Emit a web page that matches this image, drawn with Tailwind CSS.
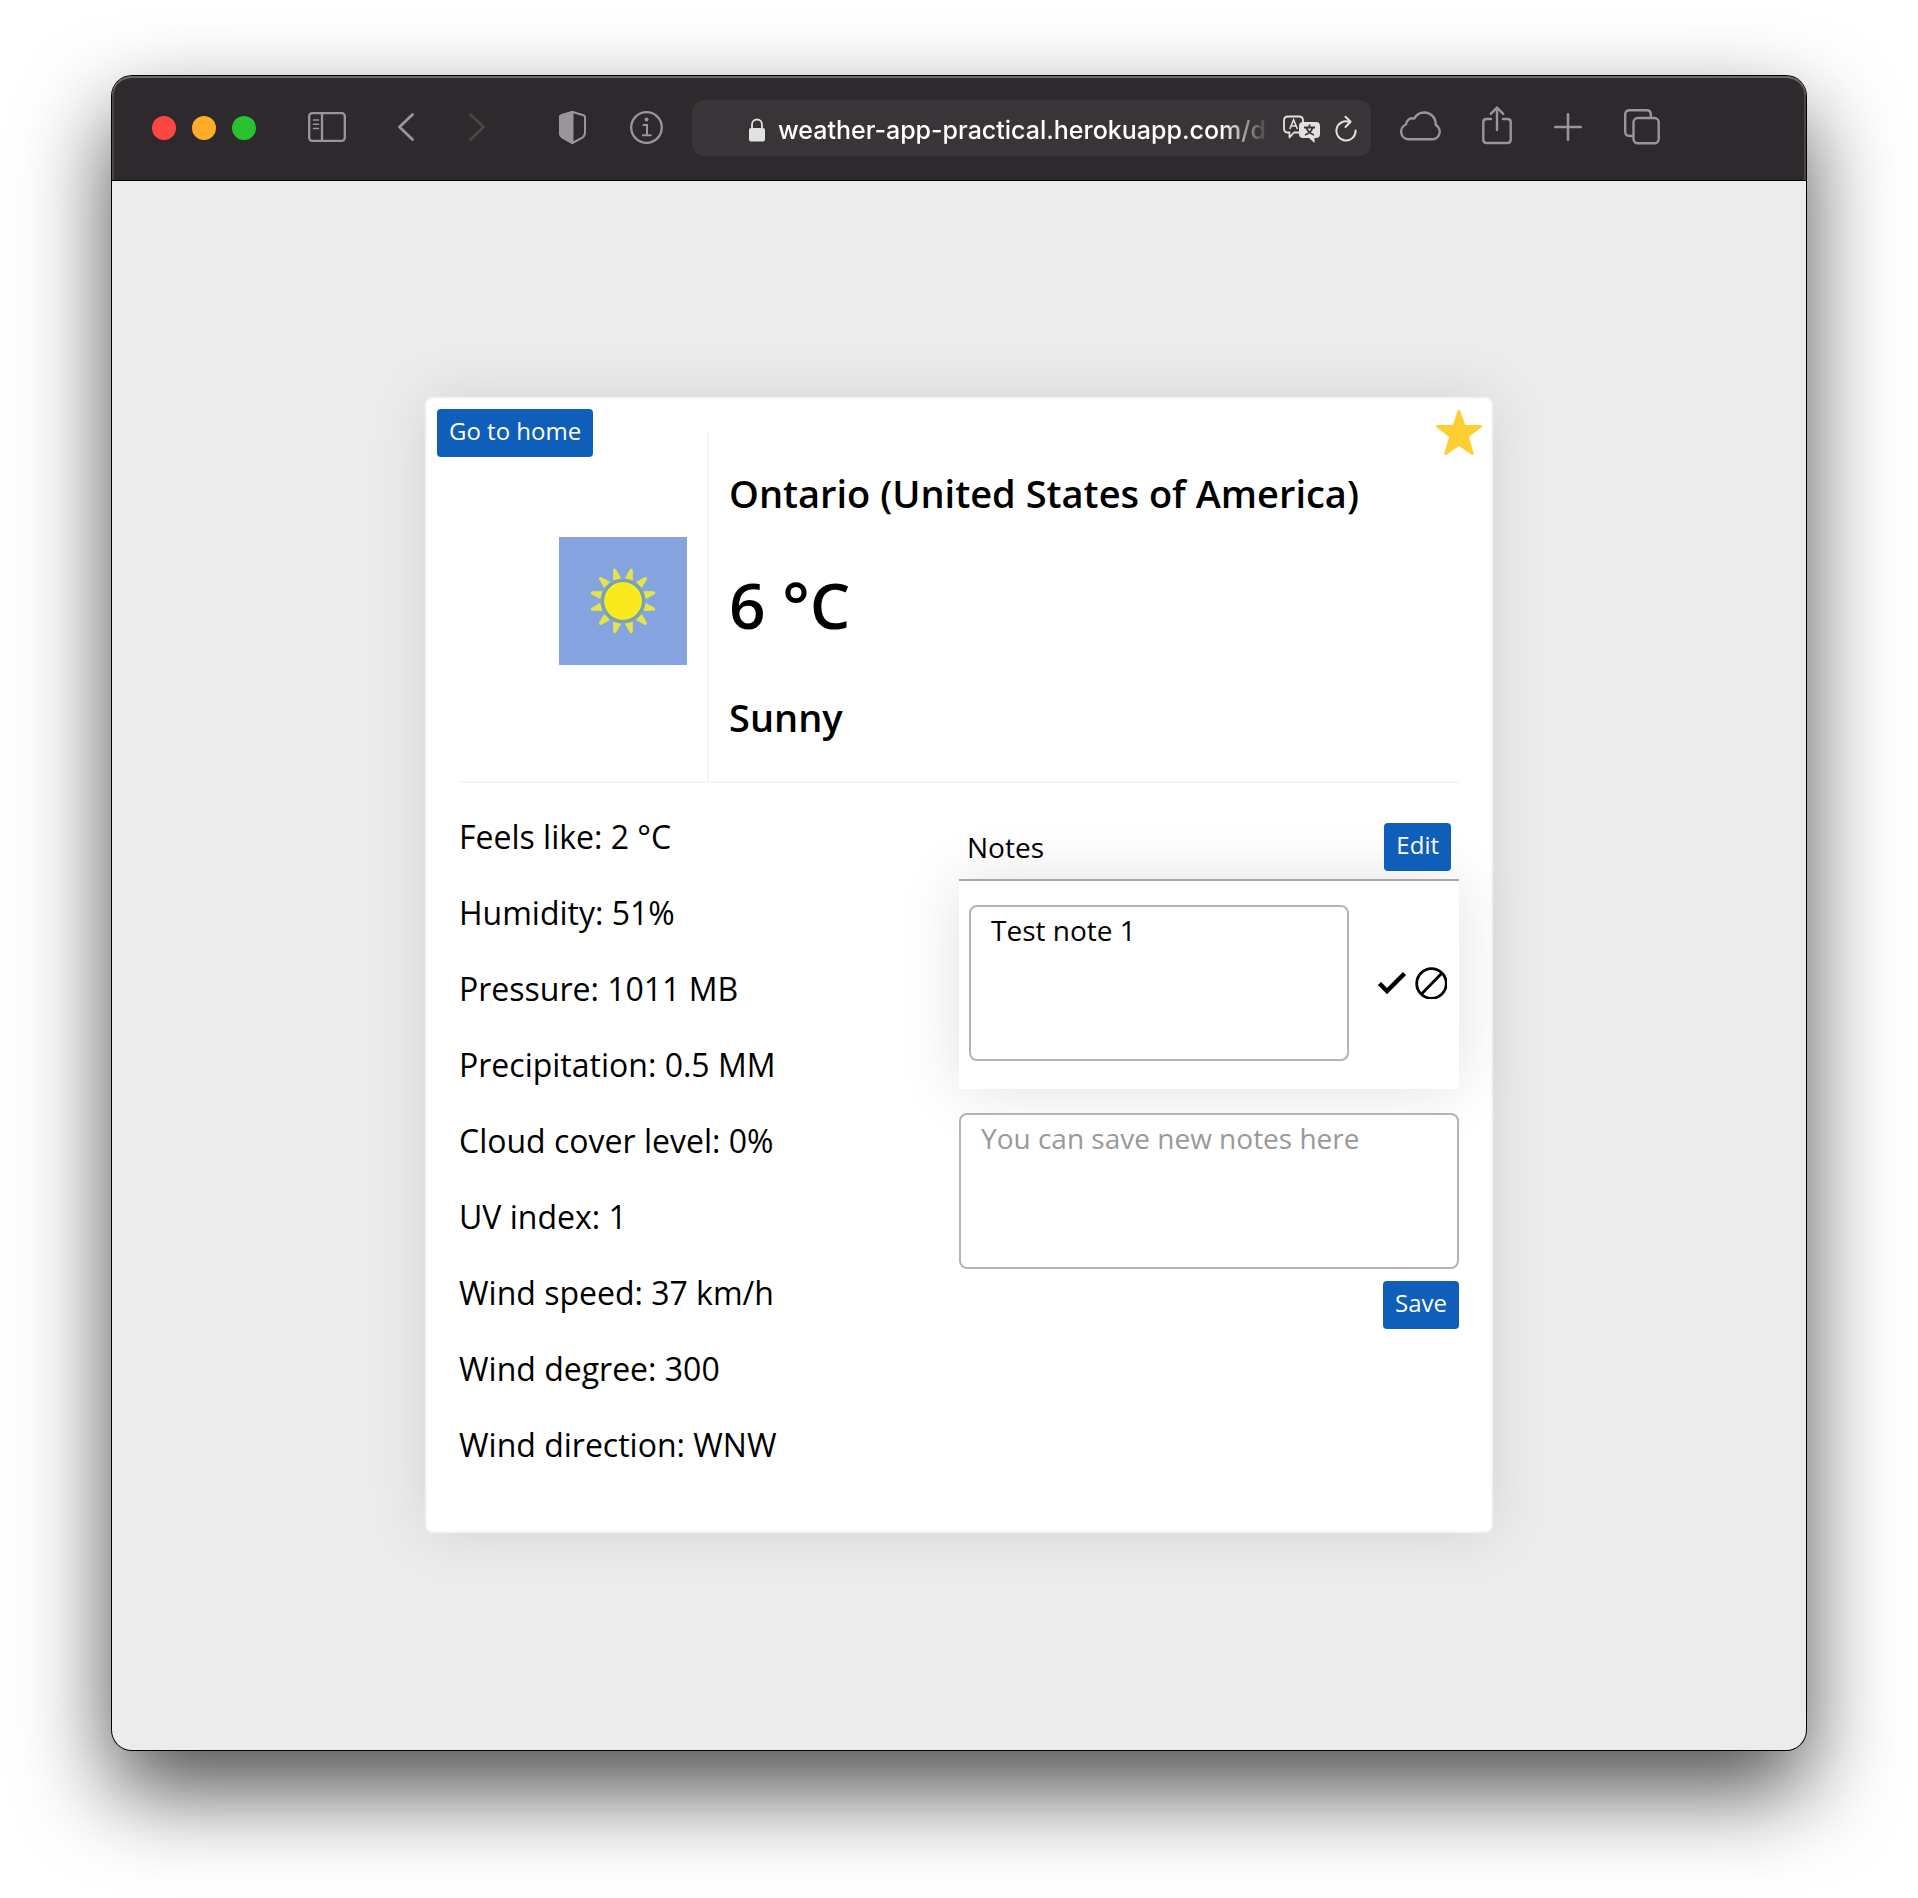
<!DOCTYPE html>
<html lang="en">
<head>
<meta charset="utf-8">
<meta name="viewport" content="width=device-width, initial-scale=1">
<title>Weather details</title>
<script src="https://cdn.jsdelivr.net/npm/@tailwindcss/browser@4"></script>
</head>
<body class="flex min-h-screen flex-col bg-white px-28 pt-[76px] pb-[148px] font-['Open_Sans',sans-serif] text-black">
<div class="flex flex-1 flex-col overflow-hidden rounded-[20px] bg-[#ececec] shadow-[0_0_0_1px_#000,0_40px_90px_rgba(0,0,0,0.7)]">

  <!-- Browser toolbar -->
  <header class="flex h-[105px] items-center rounded-t-[20px] border-b border-black bg-[#2e292c] pr-[146px] pl-10 text-[#9b959a] shadow-[inset_0_2px_0_#6b696a,inset_2px_0_0_#4a4748,inset_-2px_0_0_#4a4748]">
    <div class="flex gap-4">
      <button aria-label="Close" class="size-6 rounded-full bg-[#ff4644]"></button>
      <button aria-label="Minimize" class="size-6 rounded-full bg-[#ffae26]"></button>
      <button aria-label="Zoom" class="size-6 rounded-full bg-[#2ac231]"></button>
    </div>
    <button aria-label="Sidebar" class="mb-0.5 ml-[52px]">
      <svg class="block" width="38" height="30" viewBox="0 0 38 30" fill="none" stroke="currentColor" stroke-width="2.300"><rect x="1.200" y="1.200" width="35.600" height="27.600" rx="3"/><path d="M14 1v28"/><path d="M5.500 8h5M5.500 12.300h5M5.500 16.500h5" stroke-width="1.600" stroke-linecap="round"/></svg>
    </button>
    <button aria-label="Back" class="mb-0.5 ml-[52px]">
      <svg class="block" width="16" height="28" viewBox="0 0 16 28" fill="none" stroke="currentColor" stroke-width="2.800" stroke-linecap="round" stroke-linejoin="round"><path d="M14.500 1.500 1.500 14l13 12.500"/></svg>
    </button>
    <button aria-label="Forward" class="mb-0.5 ml-[55px] text-[#4a4548]">
      <svg class="block" width="16" height="28" viewBox="0 0 16 28" fill="none" stroke="currentColor" stroke-width="2.800" stroke-linecap="round" stroke-linejoin="round"><path d="M1.500 1.500 14.500 14l-13 12.500"/></svg>
    </button>
    <button aria-label="Privacy report" class="mb-0.5 ml-[74px]">
      <svg class="block" width="27" height="33" viewBox="0 0 27 33" fill="none" stroke="currentColor" stroke-width="2" stroke-linejoin="round"><path d="M13.500 1 24.500 4.300Q26 4.800 26 6.300V21.500Q26 24.700 23.300 26.600L13.500 32 3.700 26.600Q1 24.700 1 21.500V6.300Q1 4.800 2.500 4.300Z"/><path d="M13.500 1V32L3.700 26.600Q1 24.700 1 21.500V6.300Q1 4.800 2.500 4.300Z" fill="currentColor"/></svg>
    </button>
    <button aria-label="Page information" class="mb-0.5 ml-11">
      <svg class="block" width="33" height="33" viewBox="0 0 33 33" fill="none" stroke="currentColor" stroke-width="2.300"><circle cx="16.500" cy="16.500" r="15.300"/><path d="M13.500 14h3.500v10M12.800 24.300h8" stroke-width="2" stroke-linecap="round"/><circle cx="16.500" cy="8.500" r="2" fill="currentColor" stroke="none"/></svg>
    </button>
    <div class="ml-[29px] flex h-14 min-w-0 flex-1 items-center rounded-xl bg-[#393437] pt-1 pr-3 pl-14 text-[#e2e1e1]">
      <svg class="shrink-0" width="18" height="24" viewBox="0 0 18 24"><rect x="1" y="10" width="16" height="13.500" rx="2" fill="currentColor"/><path d="M4 11V6.500a5 5 0 0 1 10 0V11" fill="none" stroke="currentColor" stroke-width="1.800"/></svg>
      <input aria-label="Address" value="weather-app-practical.herokuapp.com/d" class="ml-3 h-8 min-w-0 flex-1 bg-transparent font-[Inter,sans-serif] text-[25px] leading-8 font-medium text-white outline-none [mask-image:linear-gradient(to_right,#000_90%,transparent)]">
      <button aria-label="Translate" class="ml-3">
        <svg class="block" width="38" height="30" viewBox="0 0 38 30"><path d="M17.500 17.500H11L6.500 22.500V17.500H5Q1 17.500 1 13.500V5.500Q1 1.500 5 1.500H16Q20 1.500 20 5.500V8" fill="none" stroke="currentColor" stroke-width="1.800" stroke-linejoin="round"/><path d="M6.800 14 10.600 4.800 14.400 14M8 11h5.200" fill="none" stroke="currentColor" stroke-width="1.600"/><path d="M20 7H33Q37 7 37 11V19Q37 23 33 23H31.500V28L26 23H20Q16 23 16 19V11Q16 7 20 7Z" fill="currentColor"/><path d="M26.500 9.500v3M21 12.500h11M23.500 13Q25 17.500 31 20M29.500 13Q28 17.500 22 20" fill="none" stroke="#393437" stroke-width="1.800"/></svg>
      </button>
      <button aria-label="Reload" class="ml-3.5">
        <svg class="block" width="24" height="30" viewBox="0 0 24 30" fill="none" stroke="currentColor" stroke-width="2" stroke-linecap="round" stroke-linejoin="round"><path d="M14.500 7A9.600 9.600 0 1 0 20.600 15.500"/><path d="M10.500 1.700 15.600 6.800 10.500 12"/></svg>
      </button>
    </div>
    <button aria-label="iCloud tabs" class="mb-1 ml-7">
      <svg class="block" width="42" height="30" viewBox="0 0 42 30" fill="none" stroke="currentColor" stroke-width="2.400" stroke-linejoin="round"><path d="M9 28.300H32.500a7.600 7.600 0 0 0 4.300-14.200C37 6.500 31.500 1.500 25.500 1.500c-4.500 0-8.300 2.300-10.200 6-4-1-8 1.500-8.300 6A7.700 7.700 0 0 0 9 28.300Z"/></svg>
    </button>
    <button aria-label="Share" class="mb-1 ml-[41px]">
      <svg class="block" width="30" height="42" viewBox="0 0 30 42" fill="none" stroke="currentColor" stroke-width="2.400" stroke-linecap="round" stroke-linejoin="round"><path d="M9 14H4.500Q1.300 14 1.300 17V34.500Q1.300 38 4.500 38H25.500Q28.700 38 28.700 34.500V17Q28.700 14 25.500 14H21M15 25V3M8.800 8.800 15 2.500l6.200 6.300"/></svg>
    </button>
    <button aria-label="New tab" class="mb-0.5 ml-[42px]">
      <svg class="block" width="28" height="28" viewBox="0 0 28 28" fill="none" stroke="currentColor" stroke-width="2.600" stroke-linecap="round"><path d="M14 1.300v25.400M1.300 14h25.400"/></svg>
    </button>
    <button aria-label="Tab overview" class="mb-0.5 ml-[42px]">
      <svg class="block" width="36" height="36" viewBox="0 0 36 36" fill="none" stroke="currentColor" stroke-width="2.400"><path d="M9.500 27H5.500Q1.200 27 1.200 22.800V5.500Q1.200 1.300 5.500 1.300H22.500Q26.800 1.300 26.800 5.500V9"/><rect x="9.500" y="9" width="25.200" height="25.300" rx="4.200"/></svg>
    </button>
  </header>

  <!-- Page -->
  <main class="flex flex-1 items-center justify-center pb-px">
    <article class="relative w-full max-w-[1068px] rounded-lg border-2 border-[#f4f5fa] bg-white p-8 shadow-[0_0_60px_rgba(0,0,0,0.1)]">
      <a href="#" class="absolute top-2.5 left-2.5 flex h-12 items-center rounded bg-[#0e5eba] px-3 pb-1 text-2xl text-white">Go to home</a>
      <button aria-label="Remove from favourites" class="absolute top-2.5 right-2">
        <svg class="block" width="48" height="48" viewBox="0 0 48 48" fill="#ffce32" stroke="#ffce32" stroke-width="2.600" stroke-linejoin="round"><path d="M24 2.300 29.200 17.100 45.700 17.300 32.500 27.500 37.400 44.700 24 35.500 10.600 44.700 15.500 27.500 2.300 17.300 18.800 17.100Z"/></svg>
      </button>

      <section class="grid grid-cols-[1fr_3fr] border-b-2 border-[#f4f5fa]">
        <div class="flex items-center justify-end border-r-2 border-[#f4f5fa] pr-5 pb-2.5">
          <svg role="img" aria-label="Sunny" class="size-32 bg-[#85a3de]" viewBox="0 0 128 128">
            <g fill="#e3e34c" transform="translate(64 64)">
              <g id="rays"><path id="ray" d="M-4.200-22.500-1.600-32Q0-35 1.600-32L4.200-22.500Z" transform="rotate(15)"/><use href="#ray" transform="rotate(30)"/><use href="#ray" transform="rotate(60)"/></g>
              <use href="#rays" transform="rotate(90)"/><use href="#rays" transform="rotate(180)"/><use href="#rays" transform="rotate(270)"/>
            </g>
            <circle cx="64" cy="64" r="20" fill="#fbe91d" stroke="#82a0a4" stroke-width="3"/>
            <circle cx="64" cy="64" r="18" fill="none" stroke="#e4f52c" stroke-width="1.500"/>
          </svg>
        </div>
        <div class="flex flex-col gap-[42px] px-5 pt-9 pb-[38px] font-semibold">
          <h1 class="text-[38px] leading-[52px]">Ontario (United States of America)</h1>
          <p class="text-[64px] leading-[88px]">6 °C</p>
          <p class="text-[38px] leading-[52px]">Sunny</p>
        </div>
      </section>

      <section class="grid grid-cols-2 py-8">
        <ul class="flex flex-col gap-8 text-[32px] leading-[44px]">
          <li>Feels like: 2 °C</li>
          <li>Humidity: 51%</li>
          <li>Pressure: 1011 MB</li>
          <li>Precipitation: 0.5 MM</li>
          <li>Cloud cover level: 0%</li>
          <li>UV index: 1</li>
          <li>Wind speed: 37 km/h</li>
          <li>Wind degree: 300</li>
          <li>Wind direction: WNW</li>
        </ul>
        <div class="text-[28px] leading-[38px]">
          <div class="relative z-10 flex items-center justify-between border-b-2 border-[#a9a9a9] p-2">
            <h2>Notes</h2>
            <button class="flex h-12 items-center rounded bg-[#0e5eba] px-3 pb-1 text-2xl text-white">Edit</button>
          </div>
          <div class="flex items-center bg-white pt-6 pr-3 pb-7 pl-2.5 shadow-[0_0_60px_rgba(0,0,0,0.12)]">
            <textarea aria-label="Edit note" class="h-[156px] min-w-0 flex-1 resize-none rounded-lg border-2 border-[#b4b4b4] bg-white px-5 py-1">Test note 1</textarea>
            <button aria-label="Confirm" class="ml-7">
              <svg class="block" width="30" height="32" viewBox="0 0 30 32" fill="none" stroke="#000" stroke-width="4.500"><path d="M2.500 16.500 10 24 27.500 6.500"/></svg>
            </button>
            <button aria-label="Cancel" class="ml-2">
              <svg class="block" width="32" height="32" viewBox="0 0 32 32" fill="none" stroke="#000" stroke-width="2.800"><circle cx="16.500" cy="16.500" r="14.800"/><path d="M6.500 27 27 6"/></svg>
            </button>
          </div>
          <textarea aria-label="New note" placeholder="You can save new notes here" class="relative mt-6 block h-[156px] w-full resize-none rounded-lg border-2 border-[#b4b4b4] bg-white px-5 py-1 placeholder:text-[#999]"></textarea>
          <button class="mt-3 ml-auto flex h-12 items-center rounded bg-[#0e5eba] px-3 pb-1 text-2xl text-white">Save</button>
        </div>
      </section>
    </article>
  </main>
</div>
</body>
</html>
